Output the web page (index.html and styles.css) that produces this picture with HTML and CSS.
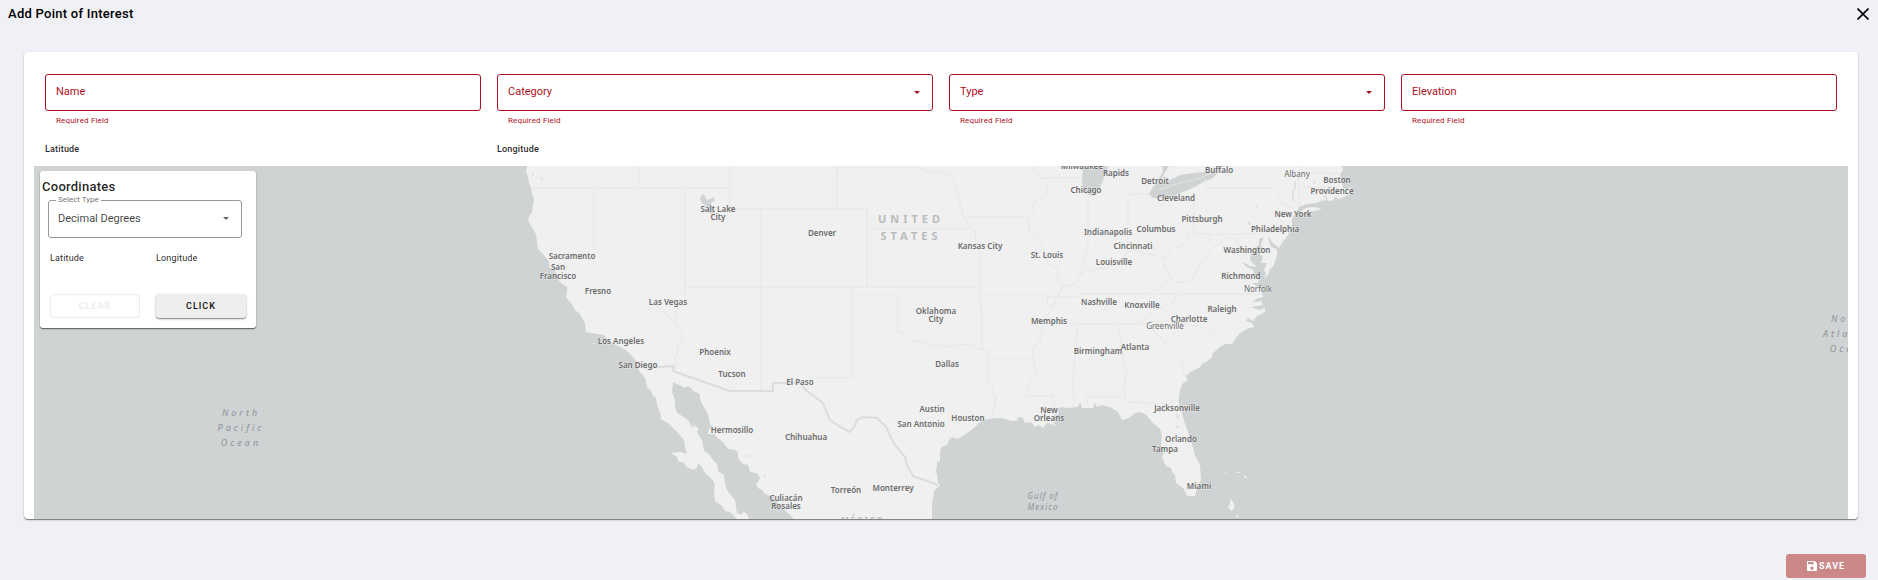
FILE: index.html
```html
<!DOCTYPE html>
<html lang="en">
<head>
    <meta charset="UTF-8">
    <meta name="viewport" content="width=device-width, initial-scale=1.0">
    <title>Add Point of Interest</title>
    <link rel="stylesheet" href="styles.css">
</head>
<body>

<header class="header">
    <h1>Add Point of Interest</h1>
    <button type="button" class="close" aria-label="Close">
        <svg viewBox="0 0 12 12" width="12" height="12"><path d="M0.500 0.500L11.500 11.500M11.500 0.500L0.500 11.500" fill="none" stroke="#000" stroke-width="1.600"/></svg>
    </button>
</header>

<form class="poi">
    <div class="card">
        <div class="fields">
            <div class="field">
                <div class="control">
                    <input type="text" id="name">
                    <label for="name">Name</label>
                </div>
                <p class="helper">Required Field</p>
            </div>
            <div class="field">
                <div class="control">
                    <select id="category"><option value=""></option></select>
                    <label for="category">Category</label>
                    <span class="arrow"></span>
                </div>
                <p class="helper">Required Field</p>
            </div>
            <div class="field">
                <div class="control">
                    <select id="type"><option value=""></option></select>
                    <label for="type">Type</label>
                    <span class="arrow"></span>
                </div>
                <p class="helper">Required Field</p>
            </div>
            <div class="field">
                <div class="control">
                    <input type="text" id="elevation">
                    <label for="elevation">Elevation</label>
                </div>
                <p class="helper">Required Field</p>
            </div>
            <div class="coord">Latitude</div>
            <div class="coord">Longitude</div>
        </div>

        <div class="map">
            <svg class="map-canvas" viewBox="34 166 1814 353" role="img" aria-label="Map">
                <!-- land -->
                <path class="land" d="M527 166L526 171L528 177L529 183L531 188L532 194L534 198L533 205L532 212L529 217L528 220L531 226L536 234L537 242L538 249L543 254L548 260L550 268L554 269L557 275L559 281L561 283L567 287L567 292L566 297L571 303L575 310L579 313L582 318L585 323L586 332L597 334L604 335L609 342L614 344L620 347L626 350L630 354L637 362L639 371L643 375L646 380L647 387L651 391L653 396L656 398L657 405L660 412L661 419L668 423L672 427L678 433L684 440L685 447L687 454L680 452L671 453L677 457L678 461L684 463L687 467L693 470L697 468L698 463L701 466L706 474L713 480L715 485L714 491L715 501L722 506L725 511L730 512L737 519L749 519L747 514L743 511L742 515L737 513L735 500L730 494L727 490L725 482L724 475L718 471L717 464L713 460L709 454L704 451L702 440L698 434L696 427L692 427L688 420L682 416L677 413L675 406L675 400L672 392L673 382L679 385L685 388L688 386L692 389L693 391L700 394L700 399L702 404L705 409L708 414L710 424L713 428L711 435L714 434L718 438L723 442L728 449L735 450L738 452L738 458L743 464L748 465L750 472L756 473L760 477L759 481L756 484L758 488L762 490L765 494L773 497L778 503L784 509L794 519H932L932 503L934 494L933 492L940 485L938 483L937 473L935 473L937 467L937 462L940 461L940 450L943 446L947 445L949 440L952 437L957 439L963 436L970 431L975 427L980 422L988 419L996 418L1002 418L1008 420L1013 421L1018 420L1017 417L1023 418L1025 423L1031 422L1035 427L1039 425L1043 428L1047 423L1051 424L1057 427L1053 423L1056 421L1052 419L1055 415L1059 414L1057 410L1061 407L1067 408L1078 407L1080 402L1082 408L1093 408L1095 403L1097 407L1101 405L1110 407L1118 412L1122 420L1129 418L1135 413L1140 412L1145 414L1153 423L1160 429L1162 435L1161 445L1164 453L1162 457L1166 466L1171 468L1172 472L1175 475L1176 483L1183 488L1186 493L1187 496L1195 496L1197 488L1201 480L1200 465L1195 455L1193 447L1190 440L1188 432L1184 421L1182 413L1179 405L1179 398L1180 390L1183 383L1188 380L1186 376L1190 372L1194 370L1197 369L1200 367L1203 363L1208 361L1212 357L1213 353L1220 347L1225 344L1232 344L1235 339L1240 333L1247 329L1254 327L1252 323L1246 321L1248 318L1253 321L1257 316L1265 312L1265 308L1259 310L1251 307L1263 305L1261 301L1252 303L1256 299L1263 297L1262 293L1258 287L1252 283L1258 283L1259 278L1254 274L1253 270L1245 266L1243 262L1250 266L1257 267L1250 260L1251 254L1254 248L1259 245L1259 239L1264 237L1261 244L1262 248L1260 254L1263 257L1261 263L1267 263L1264 270L1266 274L1264 279L1268 275L1270 269L1274 265L1277 255L1277 249L1271 247L1269 241L1268 236L1272 242L1279 248L1282 243L1288 235L1292 225L1292 218L1296 213L1299 207L1307 204L1317 203L1323 200L1332 201L1335 197L1339 199L1344 197L1353 193L1350 187L1348 190L1343 188L1342 180L1340 175L1343 170L1342 166Z"/>
                <path class="land" d="M1298 213L1306 208L1314 207L1322 209L1314 211L1303 213ZM1230 498L1233 502L1235 506L1232 511L1228 508L1230 503ZM1221 473L1228 472L1225 473ZM1236 473L1241 471L1240 473ZM1244 475L1247 477L1245 479ZM1236 513L1239 517L1237 518ZM617 353L620 355L618 354ZM619 430L622 433ZM592 343L597 344L593 344ZM666 446L668 447ZM709 428L712 430L712 434L708 434ZM693 424L699 429L697 431Z"/>
                <!-- lakes -->
                <path class="water" d="M1149 194L1153 187L1157 183L1168 181L1180 175L1194 173L1207 172L1220 170L1213 178L1203 182L1195 187L1183 192L1173 196L1163 198L1153 198ZM1083 166L1082 178L1083 188L1087 194L1092 196L1097 193L1101 185L1105 176L1108 166ZM1162 166L1163 172L1159 178L1158 183L1160 182L1164 174L1169 166ZM700 197L703 194L706 197L706 200L710 199L713 197L715 200L711 203L711 206L715 211L713 215L709 213L707 207L701 202ZM1176 412L1179 419L1177 418ZM1176 425L1179 427L1177 428ZM563 267L568 266L565 268ZM1248 221L1251 224L1249 225Z"/>
                <path class="water" d="M532 174L534 175M540 177L543 180M1256 206L1258 207M1261 197L1262 198M1293 190V201M1295 181V190M1313 181L1315 184M1325 195L1330 207M745 456H748M764 477L766 476" stroke="#cfd3d4"/>
                <!-- state lines -->
                <path class="state" d="M531 188H730M639 166V188M730 166V209H867V287M594 188V248L676 323M685 188V305L675 310L677 325L681 333L683 338L678 346L677 354L674 360L677 366M761 209V390M685 287H980M837 166V209M837 168H921L929 173L940 171L950 175L956 187L959 200L964 218L970 228L976 232L975 239L980 243V296L982 313V350M867 229H970M852 287V378H807M852 296H898V332L906 334L913 341L924 342L932 346L940 345L947 347L960 345L970 344L979 349L988 351V380L993 387L993 393L996 397L994 408L992 417M980 296H1048L1047 305H1054M988 360H1032M964 217H1025M1033 166L1034 172L1040 177L1048 187L1046 194L1042 199L1034 201L1033 211L1028 216L1028 220L1030 232L1037 238L1043 248L1044 256L1047 262L1057 269L1058 280L1062 287L1058 295L1053 307L1046 317L1042 330L1040 340L1033 350L1033 358L1036 372L1031 380L1026 396H1053L1054 404L1057 412M1040 178H1083M1088 196V247L1084 258L1081 273M1128 194V248M1128 194H1149M1194 198V225L1189 230L1188 239L1180 246L1172 248L1165 259L1154 255L1143 253L1134 250L1128 252L1122 261L1114 263L1107 268L1096 269L1088 271L1081 273L1076 283L1070 286L1063 285L1062 292M1163 257L1165 269L1172 277L1165 284L1147 294M1172 277L1175 282L1183 282L1193 279L1198 267L1204 261L1210 250L1214 247L1223 240L1229 236L1235 240L1239 245L1242 251L1247 255M1079 294H1262M1048 297H1079M1043 324H1148L1153 321L1170 322L1183 324L1207 328L1223 346M1177 295L1172 303L1162 308L1154 310L1146 317L1137 323M1194 198V234H1262M1210 234V242M1205 178V188H1273L1278 194L1282 202L1277 210L1279 219L1288 227M1282 202L1292 208M1302 173H1326L1340 174M1301 166L1299 180V206M1300 187H1338M1324 187V202M1118 324L1123 354L1123 360L1127 373L1124 384L1125 397L1128 402L1170 404L1171 400L1179 401M1086 397H1125M1086 397L1088 406M1078 324L1073 380L1074 407M1152 330L1160 336L1168 347L1178 356L1182 363L1184 373L1187 380"/>
                <!-- country lines -->
                <path class="country" d="M645 368L674 366L673 371L730 391H773V383H800L807 391L815 397L823 403L826 411L830 420L839 426L850 432L854 427L857 420L863 417L877 418L887 428L890 436L895 445L905 457L907 465L913 476L927 481L938 485M1158 190L1177 184L1198 179L1216 171"/>

                <g class="city">
                    <text x="572" y="259">Sacramento</text>
                    <text x="558" y="270">San</text>
                    <text x="558" y="279">Francisco</text>
                    <text x="668" y="305">Las Vegas</text>
                    <text x="621" y="344">Los Angeles</text>
                    <text x="638" y="368">San Diego</text>
                    <text x="715" y="355">Phoenix</text>
                    <text x="822" y="236">Denver</text>
                    <text x="980" y="249">Kansas City</text>
                    <text x="1047" y="258">St. Louis</text>
                    <text x="947" y="367">Dallas</text>
                    <text x="932" y="412">Austin</text>
                    <text x="921" y="427">San Antonio</text>
                    <text x="968" y="421">Houston</text>
                    <text x="893" y="491">Monterrey</text>
                    <text x="1082" y="169">Milwaukee</text>
                    <text x="1116" y="166">Grand</text>
                    <text x="1116" y="176">Rapids</text>
                    <text x="1086" y="193">Chicago</text>
                    <text x="1155" y="184">Detroit</text>
                    <text x="1219" y="173">Buffalo</text>
                    <text x="1176" y="201">Cleveland</text>
                    <text x="1337" y="183">Boston</text>
                    <text x="1332" y="194">Providence</text>
                    <text x="1293" y="217">New York</text>
                    <text x="1275" y="232">Philadelphia</text>
                    <text x="1202" y="222">Pittsburgh</text>
                    <text x="1156" y="232">Columbus</text>
                    <text x="1108" y="235">Indianapolis</text>
                    <text x="1133" y="249">Cincinnati</text>
                    <text x="1247" y="253">Washington</text>
                    <text x="1189" y="322">Charlotte</text>
                    <text x="1135" y="350">Atlanta</text>
                    <text x="1177" y="411">Jacksonville</text>
                    <text x="1181" y="442">Orlando</text>
                    <text x="1165" y="452">Tampa</text>
                    <text x="1199" y="489">Miami</text>
                    <text x="1049" y="324">Memphis</text>
                    <text x="1114" y="265">Louisville</text>
                    <text x="1241" y="279">Richmond</text>
                    <text x="598" y="294">Fresno</text>
                    <text x="718" y="212">Salt Lake</text>
                    <text x="718" y="220">City</text>
                    <text x="732" y="377">Tucson</text>
                    <text x="732" y="433">Hermosillo</text>
                    <text x="800" y="385">El Paso</text>
                    <text x="936" y="314">Oklahoma</text>
                    <text x="936" y="322">City</text>
                    <text x="806" y="440">Chihuahua</text>
                    <text x="1049" y="413">New</text>
                    <text x="1049" y="421">Orleans</text>
                    <text x="846" y="493">Torreón</text>
                    <text x="786" y="501">Culiacán</text>
                    <text x="786" y="509">Rosales</text>
                    <text x="1099" y="305">Nashville</text>
                    <text x="1142" y="308">Knoxville</text>
                    <text x="1222" y="312">Raleigh</text>
                    <text x="1098" y="354">Birmingham</text>
                </g>
                <g class="city minor">
                    <text x="1297" y="177">Albany</text>
                    <text x="1258" y="292">Norfolk</text>
                    <text x="1165" y="329">Greenville</text>
                </g>
                <g class="nation">
                    <text x="911" y="223">UNITED</text>
                    <text x="911" y="240">STATES</text>
                </g>
                <text class="nation small" x="863" y="523">MÉXICO</text>
                <g class="ocean">
                    <text x="241" y="416">North</text>
                    <text x="241" y="431">Pacific</text>
                    <text x="241" y="446">Ocean</text>
                    <text x="1850" y="322">North</text>
                    <text x="1850" y="337">Atlantic</text>
                    <text x="1850" y="352">Ocean</text>
                </g>
                <g class="ocean gulf">
                    <text x="1043" y="499">Gulf of</text>
                    <text x="1043" y="510">Mexico</text>
                </g>
            </svg>

            <section class="panel">
                <h2>Coordinates</h2>
                <div class="control select-type">
                    <select id="coordType"><option>Decimal Degrees</option></select>
                    <label for="coordType">Select Type</label>
                    <span class="arrow"></span>
                </div>
                <div class="panel-grid">
                    <span class="panel-label">Latitude</span>
                    <span class="panel-label">Longitude</span>
                    <button type="button" class="btn outlined" disabled>Clear</button>
                    <button type="button" class="btn raised">Click</button>
                </div>
            </section>
        </div>
    </div>

    <div class="actions">
        <button type="submit" class="btn save" disabled>
            <svg viewBox="3 3 18 18" width="10" height="10"><path fill="#fff" d="M17 3H5c-1.100 0-2 .9-2 2v14c0 1.100.9 2 2 2h14c1.100 0 2-.9 2-2V7l-4-4zm-5 16c-1.660 0-3-1.340-3-3s1.340-3 3-3 3 1.340 3 3-1.340 3-3 3zm3-10H5V5h10v4z"/></svg>
            Save
        </button>
    </div>
</form>

</body>
</html>
```

FILE: styles.css
```css
* {
    box-sizing: border-box;
}
body {
    font-family: Roboto, Arial, sans-serif;
    background-color: #f0f1f7;
    color: rgba(0, 0, 0, 0.87);
    margin: 0;
}
h1, h2, p {
    margin: 0;
}
.header {
    display: flex;
    justify-content: space-between;
    align-items: center;
    height: 28px;
    padding: 0 9px 0 8px;
}
h1, h2 {
    font-size: 13px;
    font-weight: 500;
    line-height: 20px;
    letter-spacing: 0.02em;
}
h1 {
    color: #000;
}
.close {
    display: flex;
    padding: 0;
    border: none;
    background: none;
    cursor: pointer;
}
.card {
    margin: 24px 20px 0 24px;
    padding: 22px 10px 0;
    background: #fff;
    border-radius: 4px;
    box-shadow: 0 1px 1px rgba(0, 0, 0, 0.45), 0 1px 3px rgba(0, 0, 0, 0.12);
}
.fields {
    display: grid;
    grid-template-columns: repeat(4, 1fr);
    column-gap: 16px;
    padding: 0 11px;
}
.control {
    position: relative;
    color: #ae1022;
}
.control input, .control select {
    display: block;
    width: 100%;
    height: 37px;
    padding: 0 10px;
    border: 1px solid #ae1022;
    border-radius: 3px;
    background: none;
    font-family: inherit;
    font-size: 11px;
    appearance: none;
}
.control label {
    position: absolute;
    top: 10px;
    left: 11px;
    font-size: 11px;
    line-height: 16px;
    pointer-events: none;
}
.arrow {
    position: absolute;
    top: 17px;
    right: 13px;
    border: 3px solid transparent;
    border-top-color: currentColor;
    border-bottom: none;
    pointer-events: none;
}
.helper {
    padding-left: 11px;
    margin-top: 4px;
    font-size: 8px;
    line-height: 12px;
    letter-spacing: 0.02em;
    color: #ae1022;
}
.coord {
    margin-top: 15px;
    height: 24px;
    font-size: 9px;
    font-weight: 500;
    line-height: 14px;
    letter-spacing: 0.02em;
}
.map {
    position: relative;
}
.map-canvas {
    display: block;
    width: 100%;
    background: #cfd3d4;
}
.land {
    fill: #f0f0f0;
}
.water {
    fill: #cfd3d4;
}
.state {
    fill: none;
    stroke: #e6e7e7;
}
.country {
    fill: none;
    stroke: #dcdcda;
    stroke-width: 2;
    stroke-linejoin: round;
}
.city {
    font-family: "Noto Sans", sans-serif;
    font-size: 8px;
    font-weight: 600;
    fill: #6c6c6c;
    text-anchor: middle;
    stroke: rgba(240, 240, 240, 0.7);
    stroke-width: 1;
    paint-order: stroke;
}
.minor {
    font-weight: 400;
}
.nation {
    font-family: "Noto Sans", sans-serif;
    font-size: 11px;
    font-weight: 700;
    letter-spacing: 4px;
    fill: #b9bcbc;
    text-anchor: middle;
}
.small {
    font-size: 8px;
    letter-spacing: 2px;
}
.ocean {
    font-family: "Noto Sans", sans-serif;
    font-size: 9px;
    font-style: italic;
    letter-spacing: 3px;
    fill: #8e9496;
    text-anchor: middle;
}
.gulf {
    font-size: 8px;
    letter-spacing: 1px;
}
.panel {
    position: absolute;
    top: 5px;
    left: 6px;
    width: 216px;
    padding: 6px 3px 10px 2px;
    background: #fff;
    border-radius: 3px;
    box-shadow: 0 1px 1px rgba(0, 0, 0, 0.5), 0 1px 3px rgba(0, 0, 0, 0.12);
}
.select-type {
    margin: 3px 11px 0 6px;
    color: rgba(0, 0, 0, 0.6);
}
.select-type select {
    height: 38px;
    padding: 0 9px 2px;
    border-color: #999;
    color: rgba(0, 0, 0, 0.75);
}
.select-type label {
    top: -6px;
    left: 8px;
    padding: 0 2px;
    background: #fff;
    font-size: 8px;
    line-height: 12px;
}
.panel-grid {
    display: grid;
    grid-template-columns: 90px 90px;
    gap: 29px 16px;
    margin: 13px 0 0 8px;
}
.panel-label {
    font-size: 9px;
    line-height: 14px;
    letter-spacing: 0.02em;
}
.btn {
    display: flex;
    align-items: center;
    justify-content: center;
    height: 24px;
    padding: 0;
    border: none;
    border-radius: 3px;
    font-family: inherit;
    font-size: 9px;
    font-weight: 500;
    letter-spacing: 1px;
    text-transform: uppercase;
}
.outlined {
    border: 1px solid #ececec;
    background: #fff;
    color: #ececec;
}
.raised {
    background: #eee;
    color: #111;
    box-shadow: 0 1px 1px rgba(0, 0, 0, 0.35), 0 1px 3px rgba(0, 0, 0, 0.2);
}
.actions {
    display: flex;
    justify-content: flex-end;
    padding: 35px 12px 2px;
}
.save {
    gap: 2px;
    width: 80px;
    background: #cb8889;
    color: #fff;
    font-weight: 700;
}
```
